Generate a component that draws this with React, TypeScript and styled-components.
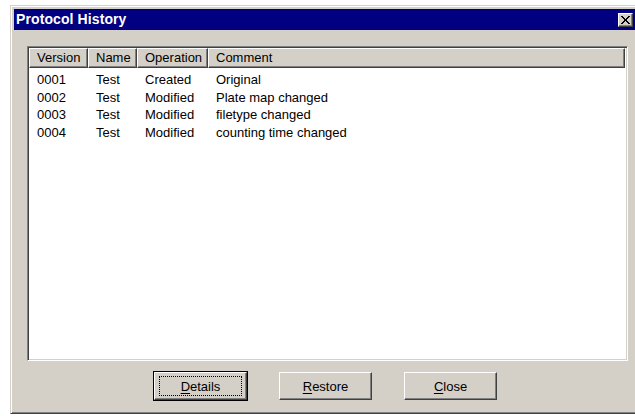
import React from 'react';
import styled, { createGlobalStyle } from 'styled-components';

const GlobalStyle = createGlobalStyle`
  html, body {
    margin: 0;
    padding: 0;
    background: #ffffff;
    overflow: hidden;
  }
  body {
    width: 635px;
    height: 416px;
    font-family: "Liberation Sans", Arial, sans-serif;
  }
  #root {
    box-sizing: border-box;
    width: 635px;
    height: 416px;
    overflow: hidden;
    padding: 5px 0 0 10px;
  }
`;

const FACE = '#d4d0c8';
const SHADOW = '#808080';
const DARK = '#404040';

/* The dialog runs past the right side of the screen; its right frame is clipped off. */
const Window = styled.div`
  box-sizing: border-box;
  width: 635px;
  height: 409px;
  display: flex;
  flex-direction: column;
  background: ${FACE};
  border-top: 1px solid ${FACE};
  border-left: 1px solid ${FACE};
  border-right: 1px solid ${DARK};
  border-bottom: 1px solid ${DARK};
  box-shadow: inset 1px 1px #ffffff, inset -1px -1px ${SHADOW};
  padding: 3px;
`;

const TitleBar = styled.div`
  height: 21px;
  flex: none;
  display: flex;
  align-items: center;
  justify-content: space-between;
  background: #000080;
  padding: 0 8px 0 2px;
`;

const Title = styled.span`
  color: #ffffff;
  font-weight: bold;
  font-size: 14px;
  line-height: 21px;
  letter-spacing: 0.1px;
`;

const CaptionButton = styled.div`
  box-sizing: border-box;
  width: 15px;
  height: 14px;
  display: flex;
  align-items: center;
  justify-content: center;
  background: ${FACE};
  border-top: 1px solid #ffffff;
  border-left: 1px solid #ffffff;
  border-right: 1px solid ${DARK};
  border-bottom: 1px solid ${DARK};
  box-shadow: inset -1px -1px ${SHADOW};
`;

const Client = styled.div`
  flex: 1;
  display: flex;
  flex-direction: column;
  padding: 16px 13px 10px 13px;
`;

const ListBox = styled.div`
  box-sizing: border-box;
  height: 315px;
  flex: none;
  display: flex;
  flex-direction: column;
  background: #ffffff;
  border-top: 1px solid ${SHADOW};
  border-left: 1px solid ${SHADOW};
  border-right: 1px solid #ffffff;
  border-bottom: 1px solid #ffffff;
  box-shadow: inset 1px 1px ${DARK}, inset -1px -1px ${FACE};
  padding: 1px;
  overflow: hidden;
`;

const COLUMNS = '59px 49px 71px 1fr';

const HeaderRow = styled.div`
  display: grid;
  grid-template-columns: ${COLUMNS};
  margin-right: 1px;
`;

const HeaderCell = styled.div`
  box-sizing: border-box;
  height: 20px;
  background: ${FACE};
  border-top: 1px solid #ffffff;
  border-left: 1px solid #ffffff;
  border-right: 1px solid ${DARK};
  border-bottom: 1px solid ${DARK};
  box-shadow: inset -1px -1px ${SHADOW};
  padding-left: 7px;
  font-size: 13px;
  line-height: 18px;
  color: #000000;
  white-space: nowrap;
  overflow: hidden;
`;

const Rows = styled.div`
  padding-top: 3px;
`;

const Row = styled.div`
  display: grid;
  grid-template-columns: ${COLUMNS};
  height: 17.5px;
  line-height: 17.5px;
  font-size: 13px;
  color: #000000;
`;

const Cell = styled.span`
  padding-left: 8px;
  white-space: nowrap;
`;

const ButtonRow = styled.div`
  display: flex;
  justify-content: center;
  gap: 32px;
  margin-top: 11px;
  padding-right: 4px;
`;

const PushButton = styled.div<{ $default?: boolean }>`
  box-sizing: border-box;
  position: relative;
  width: 93px;
  height: 28px;
  display: flex;
  align-items: center;
  justify-content: center;
  background: ${FACE};
  font-size: 13px;
  color: #000000;
  border-top: 1px solid #ffffff;
  border-left: 1px solid #ffffff;
  border-right: 1px solid ${DARK};
  border-bottom: 1px solid ${DARK};
  box-shadow: inset -1px -1px ${SHADOW};
  ${(p) =>
    p.$default &&
    `
    outline: 1px solid #000000;
    outline-offset: 0;
  `}
`;

const FocusRing = styled.div`
  position: absolute;
  inset: 3px 4px 3px 4px;
  border: 1px dotted #000000;
`;

const Label = styled.span`
  position: relative;
  u {
    text-decoration: underline;
    text-underline-offset: 2px;
  }
`;

const history = [
  { version: '0001', name: 'Test', op: 'Created', comment: 'Original' },
  { version: '0002', name: 'Test', op: 'Modified', comment: 'Plate map changed' },
  { version: '0003', name: 'Test', op: 'Modified', comment: 'filetype changed' },
  { version: '0004', name: 'Test', op: 'Modified', comment: 'counting time changed' },
];

function CloseGlyph() {
  return (
    <svg width="9" height="8" viewBox="0 0 9 8" shapeRendering="crispEdges">
      <path
        d="M0 0h2v1h1v1h1v1h1V2h1V1h1V0h2v1H8v1H7v1H6v2h1v1h1v1h1v1H7V7H6V6H5V5H4v1H3v1H2v1H0V7h1V6h1V5h1V3H2V2H1V1H0z"
        fill="#000000"
      />
    </svg>
  );
}

export default function App() {
  return (
    <>
      <GlobalStyle />
      <Window>
        <TitleBar>
          <Title>Protocol History</Title>
          <CaptionButton>
            <CloseGlyph />
          </CaptionButton>
        </TitleBar>
        <Client>
          <ListBox>
            <HeaderRow>
              <HeaderCell>Version</HeaderCell>
              <HeaderCell>Name</HeaderCell>
              <HeaderCell>Operation</HeaderCell>
              <HeaderCell>Comment</HeaderCell>
            </HeaderRow>
            <Rows>
              {history.map((h) => (
                <Row key={h.version}>
                  <Cell>{h.version}</Cell>
                  <Cell>{h.name}</Cell>
                  <Cell>{h.op}</Cell>
                  <Cell>{h.comment}</Cell>
                </Row>
              ))}
            </Rows>
          </ListBox>
          <ButtonRow>
            <PushButton $default>
              <FocusRing />
              <Label>
                <u>D</u>etails
              </Label>
            </PushButton>
            <PushButton>
              <Label>
                <u>R</u>estore
              </Label>
            </PushButton>
            <PushButton>
              <Label>
                <u>C</u>lose
              </Label>
            </PushButton>
          </ButtonRow>
        </Client>
      </Window>
    </>
  );
}
